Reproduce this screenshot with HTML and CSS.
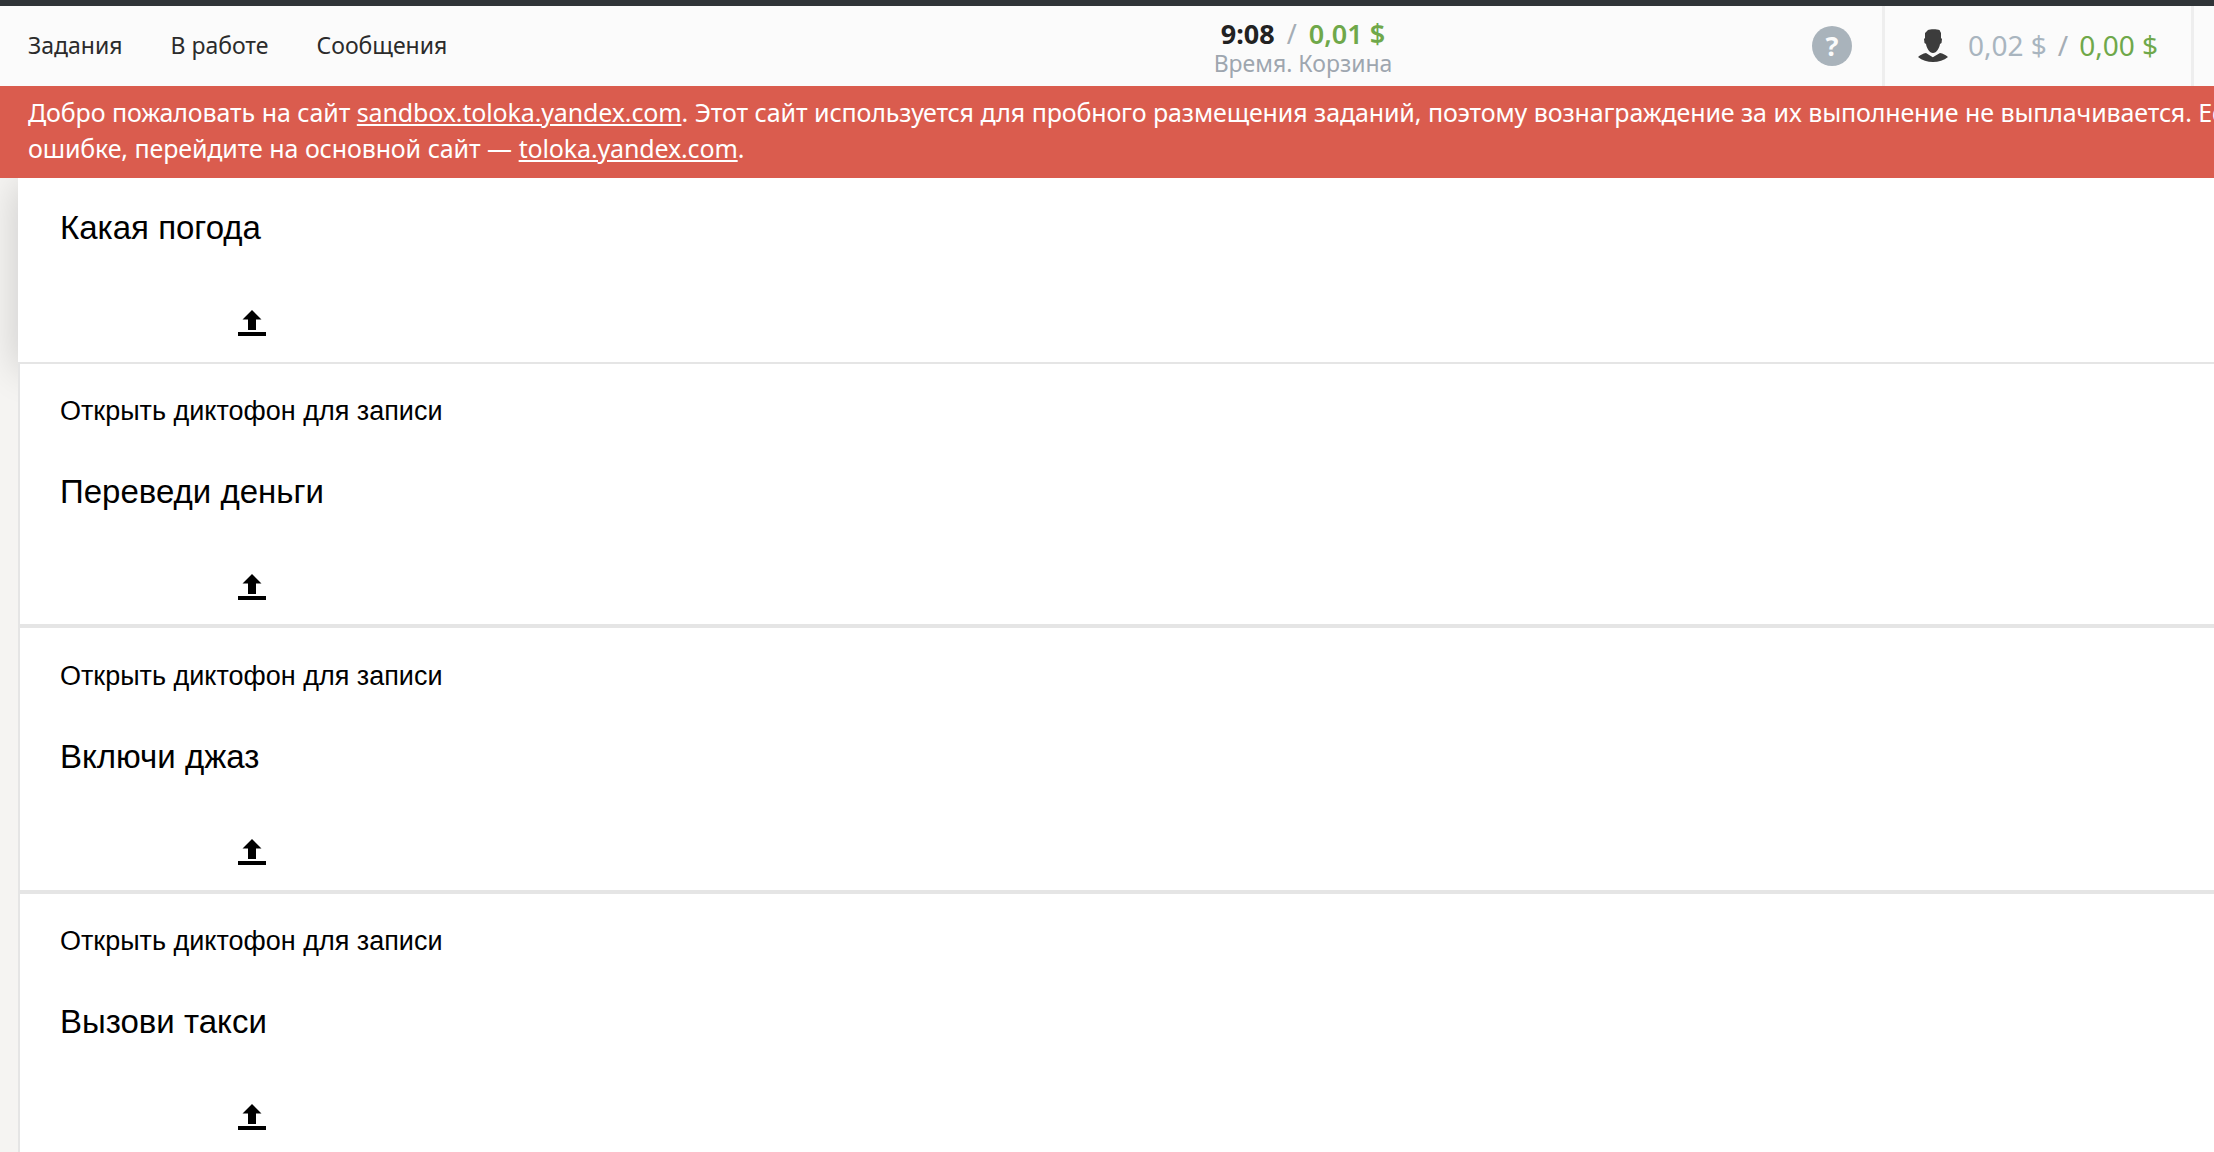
FILE: index.html
```html
<!DOCTYPE html>
<html lang="ru">
<head>
<meta charset="utf-8">
<title>Яндекс.Толока</title>
<link rel="stylesheet" href="styles.css">
</head>
<body>
<header class="topbar">
  <nav class="nav">
    <a class="nav-item">Задания</a>
    <a class="nav-item">В работе</a>
    <a class="nav-item">Сообщения</a>
  </nav>
  <div class="timer">
    <div class="timer-main"><b class="time">9:08</b><span class="slash">/</span><span class="green semi">0,01 $</span></div>
    <div class="timer-sub">Время. Корзина</div>
  </div>
  <div class="help"><span class="help-circle">?</span></div>
  <div class="balance">
    <svg class="user-icon" width="30" height="33" viewBox="0 0 30 33"><path fill="#3c3c3c" d="M10 1C12 0 19 0 21.500 1L23 4v5l1 1-.5 4-1.500 1c-.5 4-3.500 9-7 9s-6.500-5-7-9l-1.500-1-.5-4 1-1V4zM0 28c2.500-2 5-3.500 8-4l6.800 4.200L22 24c3 .5 5.500 2 8 4-4 3.500-9.500 5-15 5S4 31.500 0 28z"/></svg>
    <span class="grey">0,02 $</span><span class="slash">/</span><span class="green">0,00 $</span>
  </div>
</header>
<div class="banner">Добро пожаловать на сайт <a>sandbox.toloka.yandex.com</a>. Этот сайт используется для пробного размещения заданий, поэтому вознаграждение за их выполнение не выплачивается. Если вы оказались здесь по<br>ошибке, перейдите на основной сайт — <a>toloka.yandex.com</a>.</div>
<main class="tasks">
  <section class="card card-first">
    <h2 class="title">Какая погода</h2>
    <svg class="upload" width="28" height="26" viewBox="0 0 28 26"><path d="M14 0l9.500 9.500H18V20h-8V9.500H4.500zM0 22h28v4H0z"/></svg>
  </section>
  <section class="card">
    <p class="open">Открыть диктофон для записи</p>
    <h2 class="title">Переведи деньги</h2>
    <svg class="upload" width="28" height="26" viewBox="0 0 28 26"><path d="M14 0l9.500 9.500H18V20h-8V9.500H4.500zM0 22h28v4H0z"/></svg>
  </section>
  <section class="card card-tall">
    <p class="open">Открыть диктофон для записи</p>
    <h2 class="title">Включи джаз</h2>
    <svg class="upload" width="28" height="26" viewBox="0 0 28 26"><path d="M14 0l9.500 9.500H18V20h-8V9.500H4.500zM0 22h28v4H0z"/></svg>
  </section>
  <section class="card">
    <p class="open">Открыть диктофон для записи</p>
    <h2 class="title">Вызови такси</h2>
    <svg class="upload" width="28" height="26" viewBox="0 0 28 26"><path d="M14 0l9.500 9.500H18V20h-8V9.500H4.500zM0 22h28v4H0z"/></svg>
  </section>
</main>
</body>
</html>
```
FILE: styles.css
```css
* { box-sizing: border-box; }
html, body { margin: 0; height: 100%; overflow: hidden; background: #f5f4f2; }
body { font-family: "Noto Sans", "Open Sans", sans-serif; width: 2214px; height: 1152px; }

.topbar {
  height: 86px;
  border-top: 6px solid #303438;
  background: #fbfbfb;
  display: flex;
  align-items: center;
  position: relative;
  z-index: 1;
  color: #2b2b2b;
}
.nav { display: flex; gap: 48px; padding: 0 0 2px 28px; font-size: 23px; }
.timer { position: absolute; left: 1213px; top: 13px; width: 180px; text-align: center; line-height: 30px; white-space: nowrap; }
.timer-main { font-size: 27px; }
.time { color: #222; font-weight: 700; }
.slash { color: #a5adb5; margin: 0 12px; font-weight: 400; }
.green { color: #6fa84a; }
.semi { font-weight: 600; }
.timer-sub { color: #9ea6af; font-size: 23px; line-height: 28px; }
.help { position: absolute; left: 1812px; top: 20px; }
.help-circle {
  display: block; width: 40px; height: 40px; border-radius: 50%;
  background: #a9b3bb; color: #fbfbfb; font-size: 27px; font-weight: 700;
  line-height: 40px; text-align: center;
}
.balance {
  position: absolute; left: 1882px; top: 0; height: 80px; width: 312px;
  border-left: 3px solid #eeeeee; border-right: 3px solid #eeeeee;
  display: flex; align-items: center; padding: 0 0 3px 33px;
  font-size: 28px; white-space: nowrap;
}
.user-icon { margin: 2px 20px 0 0; }
.grey { color: #a9b5bf; }
.balance .slash { margin: 0 11px; }

.banner {
  position: relative;
  z-index: 1;
  height: 92px;
  background: #da5c4e;
  color: #fff;
  padding: 8px 0 0 28px;
  font-size: 25px;
  line-height: 36px;
  white-space: nowrap;
  overflow: hidden;
  letter-spacing: -0.14px;
  word-spacing: 0.3px;
}
.banner a { text-decoration: underline; }

.tasks { padding-left: 18px; }
.card {
  height: 264px;
  background: #fff;
  border-bottom: 4px solid #e5e5e5;
  border-left: 2px solid #e5e5e5;
  padding: 32px 0 0 40px;
  color: #000;
  font-family: "Liberation Sans", Arial, sans-serif;
}
.card-first {
  height: 186px;
  padding: 31px 0 0 42px;
  border-left: 0;
  border-bottom-width: 2px;
  box-shadow: -2px 6px 36px rgba(0, 0, 0, 0.16);
}
.card-tall { height: 266px; padding-top: 33px; }
.open { margin: 0; font-size: 27px; line-height: 30px; }
.title { margin: 0; font-size: 33px; font-weight: 400; line-height: 38px; }
.open + .title { margin-top: 47px; }
.upload { display: block; margin: 63px 0 0 178px; }
```
